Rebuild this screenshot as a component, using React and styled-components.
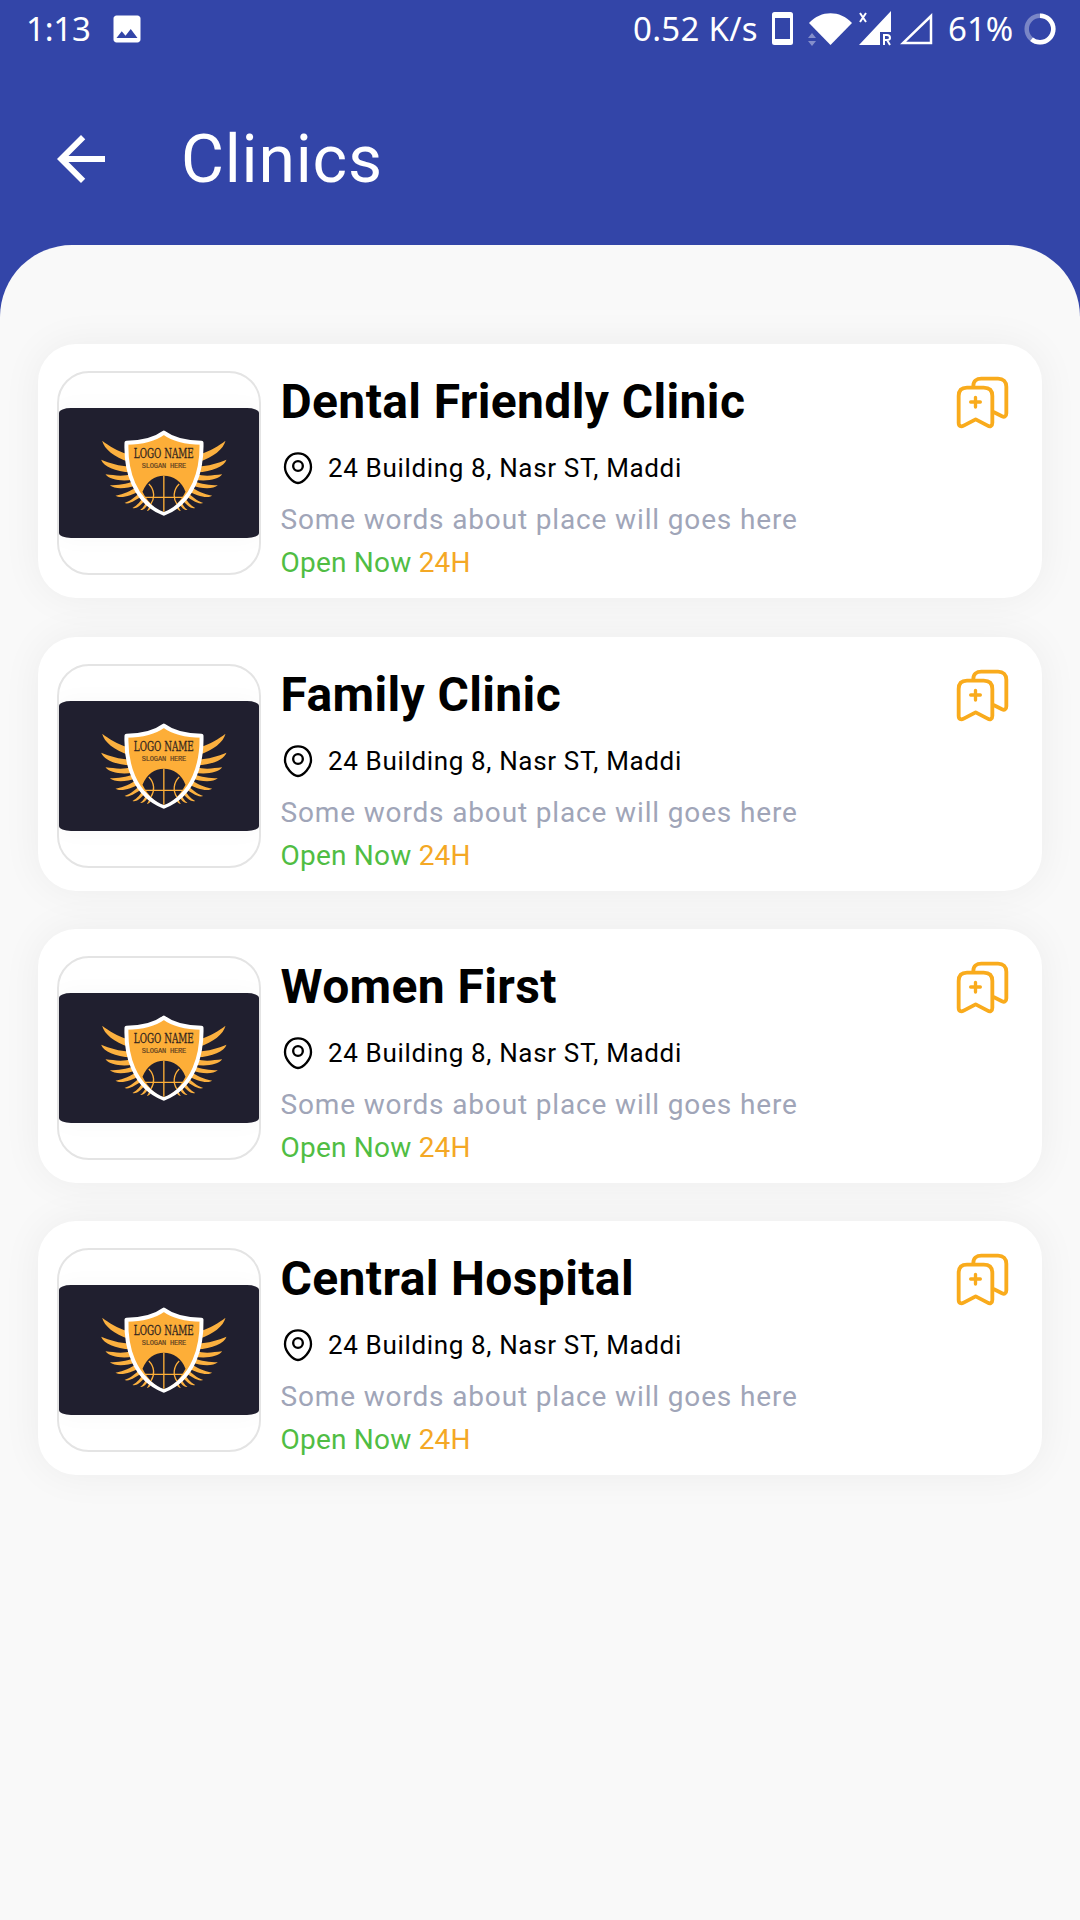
import React from "react";
import styled, { createGlobalStyle } from "styled-components";
import { MdArrowBack, MdImage } from "react-icons/md";

const GlobalStyle = createGlobalStyle`
  * { box-sizing: border-box; }
  body { margin: 0; background: #f9f9f9; }
`;

const Screen = styled.div`
  display: flex;
  flex-direction: column;
  width: 1080px;
  height: 1920px;
  overflow: hidden;
  background: #3345a8;
  font-family: Roboto, "Noto Sans", sans-serif;
`;

const StatusBar = styled.div`
  display: flex;
  align-items: center;
  justify-content: space-between;
  height: 57px;
  padding: 0 24px 0 26px;
  color: #fff;
  font-family: "Noto Sans", sans-serif;
  font-size: 33px;
  line-height: 59px;
`;

const StatusGroup = styled.div`
  display: flex;
  align-items: center;
`;

const StatusText = styled.span`
  letter-spacing: ${(p) => p.$spacing || "0"};
  white-space: nowrap;
  width: ${(p) => p.$width};
  margin-left: ${(p) => p.$gap || 0}px;
`;

const StatusIcon = styled.svg`
  display: block;
  margin-left: ${(p) => p.$gap}px;
  fill: #fff;
`;

const PictureIcon = styled(MdImage)`
  display: block;
  margin-left: 18px;
`;

const Toolbar = styled.header`
  display: flex;
  align-items: center;
  height: 170px;
  margin: 17.5px 0 0;
  padding-left: 45px;
  gap: 64px;
  color: #fff;
  flex: none;
`;

const BackIcon = styled(MdArrowBack)`
  display: block;
  margin-bottom: 2px;
`;

const PageTitle = styled.h1`
  margin: 0;
  font-size: 66px;
  line-height: 79px;
  font-weight: 400;
  letter-spacing: 0.8px;
`;

const Sheet = styled.main`
  display: flex;
  flex-direction: column;
  gap: 38.28px;
  flex: 1;
  padding: 99.75px 38px 0;
  background: #f9f9f9;
  border-radius: 72px 72px 0 0;
`;

const Card = styled.article`
  display: flex;
  align-items: flex-start;
  height: 254px;
  flex: none;
  padding: 0 32px 0 19px;
  background: #fff;
  border-radius: 38px;
  box-shadow: 0 0 40px rgba(0, 0, 0, 0.055);
`;

const Thumb = styled.div`
  display: flex;
  align-items: center;
  width: 204px;
  height: 204px;
  flex: none;
  margin-top: 27px;
  border: 2px solid #e4e4e4;
  border-radius: 32px;
  overflow: hidden;
`;

const Banner = styled.svg`
  display: block;
  width: 200px;
  height: 130px;
  border-radius: 12px / 5px;
  box-shadow: 0 0 24px rgba(0, 0, 0, 0.03);
`;

const Details = styled.div`
  display: flex;
  flex-direction: column;
  flex: 1;
  padding: 30px 0 0 19.5px;
  white-space: nowrap;
`;

const Name = styled.h2`
  margin: 0;
  font-size: 48px;
  line-height: 56px;
  font-weight: 700;
  color: #000;
  letter-spacing: 0.37px;
`;

const Address = styled.div`
  display: flex;
  align-items: center;
  gap: 14.5px;
  margin-top: 21px;
  padding-left: 1px;
  font-size: 26px;
  line-height: 32px;
  letter-spacing: 0.65px;
  color: #000;
`;

const Description = styled.div`
  margin-top: 19px;
  font-size: 28px;
  line-height: 32px;
  letter-spacing: 0.85px;
  color: #a0a5b8;
`;

const Hours = styled.div`
  margin-top: 11px;
  font-size: 28px;
  line-height: 32px;
  letter-spacing: 0.22px;
  color: #50bd43;
`;

const AllDay = styled.span`
  color: #f4a825;
`;

const BookmarkButton = styled.button`
  display: block;
  margin: 31px 0 0;
  padding: 0;
  border: 0;
  background: none;
`;

const FEATHERS = [
  "M216 303 C222 328 252 352 296 367 L292 343 C262 335 236 318 216 303Z",
  "M213 360 C220 380 255 396 302 398 L298 380 C268 380 238 370 213 360Z",
  "M226 404 C238 420 272 426 311 420 L306 404 C275 411 252 407 226 404Z",
  "M239 437 C254 450 288 448 319 437 L314 423 C288 434 264 436 239 437Z",
  "M256 468 C272 478 304 467 329 453 L323 440 C300 454 282 464 256 468Z",
  "M283 490 C298 496 320 479 339 466 L332 455 C316 472 303 483 283 490Z",
  "M307 505 C321 509 335 492 349 477 L341 468 C331 485 322 497 307 505Z",
  "M330 511 C342 513 350 499 359 487 L351 480 C346 492 340 503 330 511Z",
  "M350 514 C359 513 363 504 367 496 L360 490 C358 500 355 507 350 514Z",
];

const Wing = () => FEATHERS.map((d) => <path key={d} d={d} fill="#fbb03f" />);

const TeamBanner = () => (
  <Banner viewBox="88 205 600 390" preserveAspectRatio="none">
    <rect x="88" y="205" width="600" height="390" fill="#201f2f" />
    <g transform="translate(1.5 0)">
      <Wing />
      <g transform="translate(802 0) scale(-1 1)">
        <Wing />
      </g>
      <path
        d="M401 279 C373 300 333 309 289 309 C286 387 309 487 401 522 C493 487 516 387 514 309 C469 309 429 300 401 279Z"
        fill="#fdae38"
        stroke="#fff"
        strokeWidth="12"
        strokeLinejoin="round"
      />
      <path
        d="M337 456 C350 424 373 408 401 408 C429 408 454 424 466 456 C450 488 428 507 401 517 C374 507 353 488 337 456Z"
        fill="#201f2f"
      />
      <path
        d="M401 408 V516 M343 473 H459 M356 433 C374 451 374 475 362 493 M447 433 C429 451 428 475 440 493"
        fill="none"
        stroke="#fdae38"
        strokeWidth="4"
      />
      <text x="311" y="354" textLength="180" lengthAdjust="spacingAndGlyphs" fontFamily="DejaVu Serif, serif" fontSize="36" fill="#33261f" stroke="#33261f" strokeWidth="0.8">
        LOGO NAME
      </text>
      <text x="335" y="384" textLength="133" lengthAdjust="spacing" fontFamily="Liberation Mono, monospace" fontSize="21" fill="#5c4022" stroke="#5c4022" strokeWidth="0.5">
        SLOGAN HERE
      </text>
    </g>
  </Banner>
);

const PinIcon = () => (
  <svg width="32" height="34" viewBox="66 270 96 102" fill="none" stroke="#000" strokeWidth="7">
    <path d="M114 277 C92 277 75 293 75 319 C75 340 98 366 114 366 C130 366 153 340 153 319 C153 293 136 277 114 277Z" />
    <circle cx="114" cy="315" r="14.5" />
  </svg>
);

const BookmarksIcon = () => (
  <svg width="55" height="55" viewBox="105 135 165 165" fill="none" stroke="#f9ab1c" strokeWidth="11.5" strokeLinecap="round" strokeLinejoin="round">
    <path d="M160 168 C160 153 170 146 184 146 H234 C250 146 259 155 259 170 V250 C259 260 253 262 246 259 L222 247" />
    <path d="M116 198 C116 181 125 173 141 173 H191 C208 173 217 181 217 198 V278 C217 289 210 291 203 287 L167 268 L131 287 C123 291 116 289 116 278Z" />
    <path d="M152 216 H181 M166.500 202 V231" strokeWidth="10" />
  </svg>
);

const CLINICS = ["Dental Friendly Clinic", "Family Clinic", "Women First", "Central Hospital"];

const ClinicCard = ({ name }) => (
  <Card>
    <Thumb>
      <TeamBanner />
    </Thumb>
    <Details>
      <Name>{name}</Name>
      <Address>
        <PinIcon />
        24 Building 8, Nasr ST, Maddi
      </Address>
      <Description>Some words about place will goes here</Description>
      <Hours>
        Open Now <AllDay>24H</AllDay>
      </Hours>
    </Details>
    <BookmarkButton aria-label="Save">
      <BookmarksIcon />
    </BookmarkButton>
  </Card>
);

export default function App() {
  return (
    <>
      <GlobalStyle />
      <Screen>
        <StatusBar>
          <StatusGroup>
            <StatusText $spacing="-0.2px" $width="65px">1:13</StatusText>
            <PictureIcon size={36} />
          </StatusGroup>
          <StatusGroup>
            <StatusText $spacing="0.3px" $width="128px">0.52 K/s</StatusText>
            <StatusIcon $gap={11} width="21" height="33" viewBox="0 0 21 33">
              <path fillRule="evenodd" d="M2.500 0H18.500Q21 0 21 2.500V30.500Q21 33 18.500 33H2.500Q0 33 0 30.500V2.500Q0 0 2.500 0ZM3 6V27H18V6Z" />
            </StatusIcon>
            <StatusIcon $gap={14} width="46" height="34" viewBox="0 0 46 34">
              <path d="M23.500 33 L2 11 C14 -2 33 -2 45 11Z" />
              <path d="M1 26 L5 21 L9 26Z M1 29 H9 L5 34Z" opacity=".4" />
            </StatusIcon>
            <StatusIcon $gap={5} width="34" height="35" viewBox="0 0 34 35">
              <path d="M33 0 V21 H22 V34 H1Z" />
              <path d="M2 2 L8 11 M8 2 L2 11 M26 34 V24 H29 Q32 24 32 27 Q32 29 29 29 H26 M29 29 L32 34" fill="none" stroke="#fff" strokeWidth="2" />
            </StatusIcon>
            <StatusIcon $gap={8} width="33" height="32" viewBox="0 0 33 32">
              <path d="M31 3 V30 H3Z" fill="none" stroke="#fff" strokeWidth="2.500" />
            </StatusIcon>
            <StatusText $gap={15} $width="66px">61%</StatusText>
            <StatusIcon $gap={10} width="32" height="32" viewBox="0 0 32 32">
              <circle cx="16" cy="16" r="13.3" fill="none" stroke="#fff" strokeWidth="4.500" opacity=".35" />
              <circle cx="16" cy="16" r="13.3" fill="none" stroke="#fff" strokeWidth="4.500" pathLength="100" strokeDasharray="61 39" transform="rotate(-90 16 16)" />
            </StatusIcon>
          </StatusGroup>
        </StatusBar>
        <Toolbar>
          <BackIcon size={72} />
          <PageTitle>Clinics</PageTitle>
        </Toolbar>
        <Sheet>
          {CLINICS.map((name) => (
            <ClinicCard key={name} name={name} />
          ))}
        </Sheet>
      </Screen>
    </>
  );
}
